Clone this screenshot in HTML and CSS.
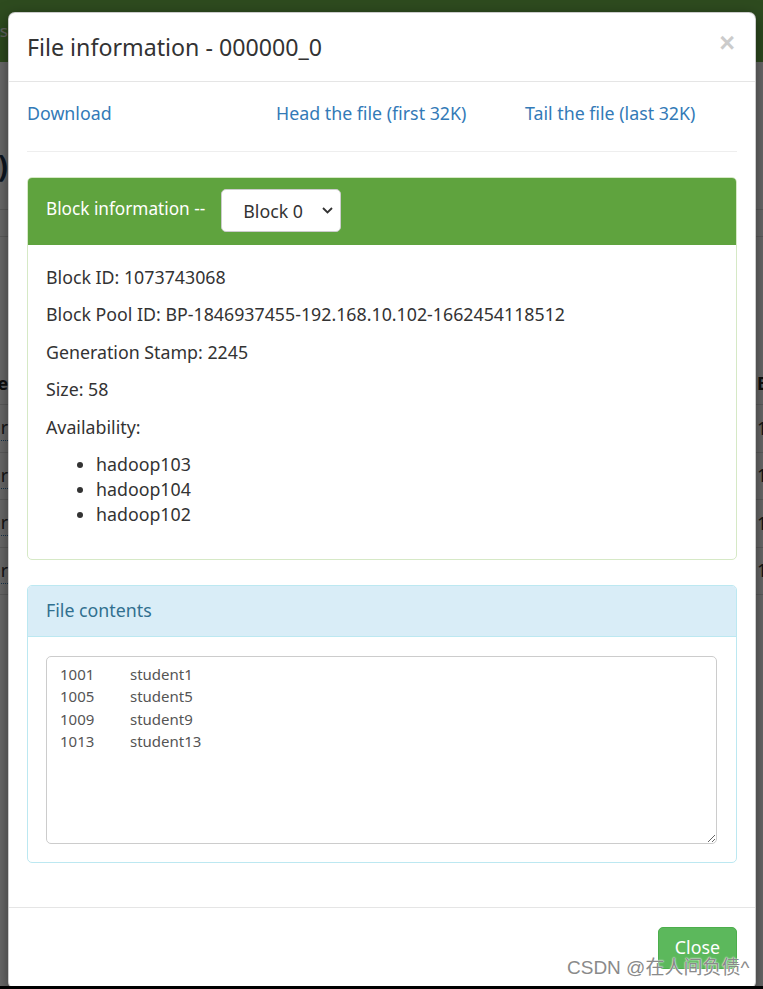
FILE: index.html
```html
<!DOCTYPE html>
<html lang="en">
<head>
    <meta charset="UTF-8">
    <meta name="viewport" content="width=device-width, initial-scale=1.0">
    <title>File information - 000000_0</title>
    <link rel="stylesheet" href="styles.css">
</head>
<body>
    <div class="screen">
        <!-- Page behind the dialog -->
        <div class="page">
            <div class="navbar">
                <span class="edge-left"><span>Utilities</span></span>
            </div>
            <div class="title-row">
                <span class="edge-left"><span class="page-title">Browse Directory (/)</span></span>
            </div>
            <div class="tool-row"></div>
            <div class="table-head">
                <span class="edge-left"><span>Name</span></span>
                <span class="edge-right"><span>Block Size</span></span>
            </div>
            <div class="table-row">
                <span class="edge-left"><a>user</a></span>
                <span class="edge-right"><span>1.</span></span>
            </div>
            <div class="table-row">
                <span class="edge-left"><a>user</a></span>
                <span class="edge-right"><span>1.</span></span>
            </div>
            <div class="table-row">
                <span class="edge-left"><a>user</a></span>
                <span class="edge-right"><span>1.</span></span>
            </div>
            <div class="table-row">
                <span class="edge-left"><a>user</a></span>
                <span class="edge-right"><span>1.</span></span>
            </div>
        </div>

        <div class="backdrop"></div>

        <!-- File information dialog -->
        <div class="modal">
            <div class="modal-content">
                <div class="modal-header">
                    <h4 class="modal-title">File information - 000000_0</h4>
                    <span class="close">&times;</span>
                </div>

                <div class="modal-body">
                    <div class="link-row">
                        <a href="#">Download</a>
                        <a href="#">Head the file (first 32K)</a>
                        <a href="#">Tail the file (last 32K)</a>
                    </div>
                    <hr>

                    <!-- Block information panel -->
                    <div class="panel panel-success">
                        <div class="panel-heading">
                            <span class="heading-text">Block information --</span>
                            <span class="select-wrap">
                                <select class="block-select">
                                    <option>Block 0</option>
                                </select>
                                <svg class="chevron" width="11" height="7" viewBox="0 0 11 7">
                                    <polyline points="1,1 5.5,5.5 10,1" fill="none" stroke="#333" stroke-width="1.8"/>
                                </svg>
                            </span>
                        </div>
                        <div class="panel-body">
                            <p>Block ID: 1073743068</p>
                            <p>Block Pool ID: BP-1846937455-192.168.10.102-1662454118512</p>
                            <p>Generation Stamp: 2245</p>
                            <p>Size: 58</p>
                            <p>Availability:</p>
                            <ul>
                                <li>hadoop103</li>
                                <li>hadoop104</li>
                                <li>hadoop102</li>
                            </ul>
                        </div>
                    </div>

                    <!-- File contents panel -->
                    <div class="panel panel-info">
                        <div class="panel-heading">File contents</div>
                        <div class="panel-body">
                            <textarea class="file-text" readonly>1001	student1
1005	student5
1009	student9
1013	student13</textarea>
                        </div>
                    </div>
                </div>

                <div class="modal-footer">
                    <button type="button" class="btn-close">Close</button>
                </div>
            </div>
        </div>

        <div class="watermark">CSDN @在人间负债^</div>
    </div>
</body>
</html>
```

FILE: styles.css
```css
* {
    box-sizing: border-box;
}

html,
body {
    margin: 0;
    background-color: #000;
}

body {
    font-family: "Noto Sans", "Open Sans", sans-serif;
    font-size: 17.8px;
    line-height: 25px;
    color: #333;
}

.screen {
    position: relative;
    height: 986px;
    overflow: hidden;
    background-color: #fff;
}

/* Page behind the dialog */
.page {
    height: 100%;
}

.navbar {
    height: 62px;
    background-color: #6fb34a;
    color: #eee;
    padding-top: 18px;
    font-size: 17px;
}

.edge-left,
.edge-right {
    display: flex;
    overflow: hidden;
    white-space: nowrap;
}

.edge-left {
    width: 8px;
    justify-content: flex-end;
}

.edge-right {
    width: 6px;
    justify-content: flex-start;
}

.title-row {
    height: 148px;
    padding-top: 86px;
    border-bottom: 1px solid #ddd;
}

.page-title {
    font-size: 30px;
    line-height: 36px;
    font-weight: bold;
    color: #1d3550;
}

.tool-row {
    height: 27px;
    border-bottom: 1px solid #ddd;
    margin-bottom: 125px;
}

.table-head,
.table-row {
    display: flex;
    justify-content: space-between;
    align-items: center;
    border-bottom: 1px solid #ddd;
}

.table-head {
    height: 43px;
    font-weight: bold;
    color: #222;
}

.table-row {
    height: 47.5px;
}

.table-row a {
    color: #333;
    border-bottom: 1px dotted #337ab7;
}

.table-row .edge-right span {
    color: #333;
}

.backdrop {
    position: absolute;
    inset: 0;
    background-color: rgba(0, 0, 0, 0.58);
}

/* Dialog */
.modal {
    position: absolute;
    top: 12px;
    left: 8px;
    width: 748px;
}

.modal-content {
    background-color: #fff;
    border: 1px solid rgba(0, 0, 0, 0.2);
    border-radius: 7px;
    box-shadow: 0 5px 15px rgba(0, 0, 0, 0.5);
}

.modal-header {
    display: flex;
    justify-content: space-between;
    align-items: center;
    padding: 18px 19px 18px 18px;
    border-bottom: 1px solid #e5e5e5;
}

.modal-title {
    margin: 0;
    font-size: 23.2px;
    line-height: 32px;
    font-weight: normal;
    color: #333;
}

.close {
    font-family: "Liberation Sans", sans-serif;
    font-size: 27px;
    font-weight: bold;
    line-height: 1;
    color: #000;
    opacity: 0.2;
    margin-top: -7px;
    margin-right: 1px;
    cursor: pointer;
}

.modal-body {
    padding: 19px 18px;
}

.link-row {
    display: grid;
    grid-template-columns: 249px 249px 1fr;
}

a {
    color: #337ab7;
    text-decoration: none;
}

hr {
    margin: 25px 0 25px;
    border: 0;
    border-top: 1px solid #eee;
}

/* Panels */
.panel {
    border: 1px solid transparent;
    border-radius: 5px;
    margin-bottom: 25px;
}

.panel-heading {
    border-bottom: 1px solid transparent;
    border-top-left-radius: 4px;
    border-top-right-radius: 4px;
}

.panel-body {
    padding: 19px 19px;
}

.panel-success {
    border-color: #d6e9c6;
}

.panel-success .panel-heading {
    display: flex;
    align-items: center;
    padding: 11px 18px 12px;
    background-color: #5fa33e;
    border-color: #5fa33e;
    color: #fff;
}

.heading-text {
    font-size: 17.2px;
    margin-top: -4px;
}

.panel-info {
    border-color: #bce8f1;
}

.panel-info .panel-heading {
    padding: 12.5px 18px 12.5px;
    background-color: #d9edf7;
    border-color: #bce8f1;
    color: #31708f;
}

.panel-info .panel-body {
    padding: 19px 19px 18px 18px;
}

.panel-success .panel-body {
    padding: 19.5px 18px 19px;
}

p {
    margin: 0 0 12.5px;
}

ul {
    margin: 0 0 12.5px;
    padding-left: 50px;
}

/* Block selector */
.select-wrap {
    position: relative;
    margin-left: 16px;
}

.block-select {
    appearance: none;
    display: block;
    width: 120px;
    height: 43px;
    padding: 0 0 0 21px;
    font-family: inherit;
    font-size: 17.8px;
    color: #333;
    background-color: #fff;
    border: 1px solid #ccc;
    border-radius: 5px;
}

.chevron {
    position: absolute;
    top: 18px;
    right: 8px;
}

/* File contents */
.file-text {
    display: block;
    width: 100%;
    height: 188px;
    padding: 6px 13px;
    font-family: inherit;
    font-size: 15px;
    line-height: 22.5px;
    color: #555;
    border: 1px solid #ccc;
    border-radius: 5px;
    tab-size: 70px;
    -moz-tab-size: 70px;
    resize: vertical;
}

.modal-footer {
    display: flex;
    justify-content: flex-end;
    padding: 19px 18px 19px;
    border-top: 1px solid #e5e5e5;
}

.btn-close {
    height: 42px;
    padding: 0 16px 1px;
    font-family: inherit;
    font-size: 17.8px;
    color: #fff;
    background-color: #5cb85c;
    border: 1px solid #4cae4c;
    border-radius: 5px;
    cursor: pointer;
}

.watermark {
    position: absolute;
    left: 567px;
    top: 955px;
    font-family: "Liberation Sans", "Noto Sans CJK SC", sans-serif;
    font-size: 19px;
    line-height: 26px;
    color: #8a8a8a;
    text-shadow: 0 0 2px #fff, 0 0 1px #fff;
    white-space: nowrap;
}
```
